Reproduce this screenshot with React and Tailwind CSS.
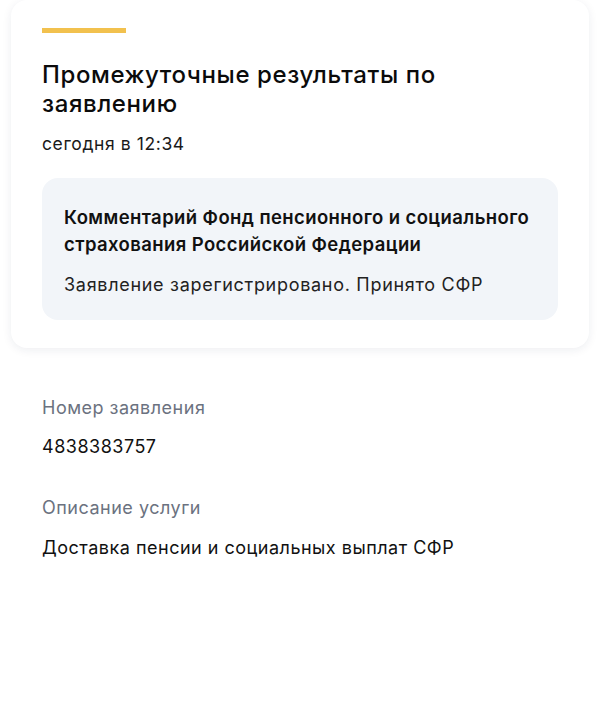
export default function App() {
  return (
    <div className="min-h-[707px] bg-white" style={{ fontFamily: 'Inter, "Noto Sans", sans-serif' }}>
      <div className="px-[11px]">
        <div className="rounded-[16px] bg-white shadow-[0_2px_10px_rgba(20,40,80,0.08)] px-[31px] pt-[28px] pb-[28px]">
          <div className="h-[5px] w-[84px] bg-[#f2c14e]" />
          <h1 className="mt-[27px] text-[24px] leading-[29px] font-medium text-[#0b0b0b] tracking-[0.6px]">
            Промежуточные результаты по<br />заявлению
          </h1>
          <div className="mt-[15px] text-[17.5px] leading-[22px] text-[#1a1a1a] tracking-[0.6px]">сегодня в 12:34</div>
          <div className="mt-[23px] rounded-[16px] bg-[#f2f5f9] px-[22px] pt-[26px] pb-[23px]">
            <div className="text-[18.5px] leading-[27px] font-semibold text-[#111] tracking-[0.4px]">
              Комментарий Фонд пенсионного и социального<br />страхования Российской Федерации
            </div>
            <div className="mt-[15px] text-[18px] leading-[24px] text-[#222] tracking-[0.7px]">
              Заявление зарегистрировано. Принято СФР
            </div>
          </div>
        </div>
      </div>
      <div className="px-[42px] pt-[48px]">
        <div className="text-[18px] leading-[24px] text-[#6b7280] tracking-[0.5px]">Номер заявления</div>
        <div className="mt-[15px] text-[18px] leading-[24px] text-[#111] tracking-[0.5px]">4838383757</div>
        <div className="mt-[37px] text-[18px] leading-[24px] text-[#6b7280] tracking-[0.5px]">Описание услуги</div>
        <div className="mt-[16px] text-[18px] leading-[24px] text-[#111] tracking-[0.5px]">Доставка пенсии и социальных выплат СФР</div>
      </div>
    </div>
  );
}
